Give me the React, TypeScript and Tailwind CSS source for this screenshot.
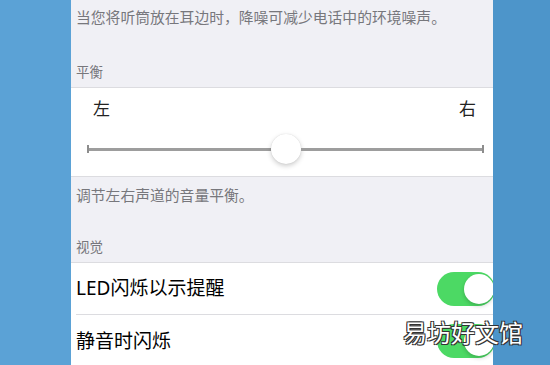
const font = { fontFamily: '"Noto Sans", "Noto Sans CJK SC", sans-serif' };

function Toggle() {
  return (
    <div className="flex h-[34px] w-[58px] shrink-0 items-center justify-end rounded-full bg-[#4cd964] pr-[1px]">
      <div className="h-[30px] w-[30px] rounded-full bg-white shadow-[0_2px_4px_rgba(0,0,0,0.2)]" />
    </div>
  );
}

function Row({ label, last }: { label: string; last?: boolean }) {
  return (
    <div className="ml-[5px] flex h-[52px] items-center border-[#dcdce0]" style={{ borderBottomWidth: last ? 0 : 1 }}>
      <span className="text-[19px] text-black">{label}</span>
      <div className="ml-auto -mr-[2px]">
        <Toggle />
      </div>
    </div>
  );
}

function Slider() {
  return (
    <div className="mt-[13px] flex h-[30px] items-center pl-[16px] pr-[9px]">
      <div className="h-[8px] w-[2px] bg-[#8d8d8d]" />
      <div className="h-[3px] w-[182px] bg-[#9d9d9d]" />
      <div className="h-[30px] w-[30px] shrink-0 rounded-full bg-white shadow-[0_2px_5px_rgba(0,0,0,0.2),0_0_1px_rgba(0,0,0,0.15)]" />
      <div className="h-[3px] flex-1 bg-[#9d9d9d]" />
      <div className="h-[8px] w-[2px] bg-[#8d8d8d]" />
    </div>
  );
}

export default function App() {
  return (
    <div className="relative flex h-[365px] w-[550px] overflow-hidden" style={font}>
      <div className="w-[71px] bg-[#5ba2d6]" />
      <div className="w-[422px] overflow-hidden bg-[#f0f0f5]">
        <div className="h-[88px] border-b border-[#dcdce0] pl-[5px]">
          <p className="pt-[6px] text-[14.8px] leading-[22px] text-[#77777c]">
            当您将听筒放在耳边时，降噪可减少电话中的环境噪声。
          </p>
          <p className="pt-[34px] text-[13.5px] leading-[20px] text-[#77777c]">平衡</p>
        </div>
        <div className="h-[88px] bg-white pt-[9px]">
          <div className="flex justify-between pl-[22px] pr-[17px] text-[17px] leading-[24px] text-[#222]">
            <span>左</span>
            <span>右</span>
          </div>
          <Slider />
        </div>
        <div className="h-[87px] border-t border-b border-[#dcdce0] pl-[5px]">
          <p className="pt-[7px] text-[14.8px] leading-[22px] text-[#77777c]">调节左右声道的音量平衡。</p>
          <p className="pt-[31px] text-[13.5px] leading-[20px] text-[#77777c]">视觉</p>
        </div>
        <div className="bg-white">
          <Row label="LED闪烁以示提醒" />
          <Row label="静音时闪烁" last />
        </div>
      </div>
      <div className="flex-1 bg-[#4d95ca]" />
      <div className="absolute left-[403px] top-[318px] text-[24px] leading-[30px] text-white [text-shadow:_-1px_-1px_0_#333,1px_-1px_0_#333,-1px_1px_0_#333,1px_1px_0_#333]">
        易坊好文馆
      </div>
    </div>
  );
}
